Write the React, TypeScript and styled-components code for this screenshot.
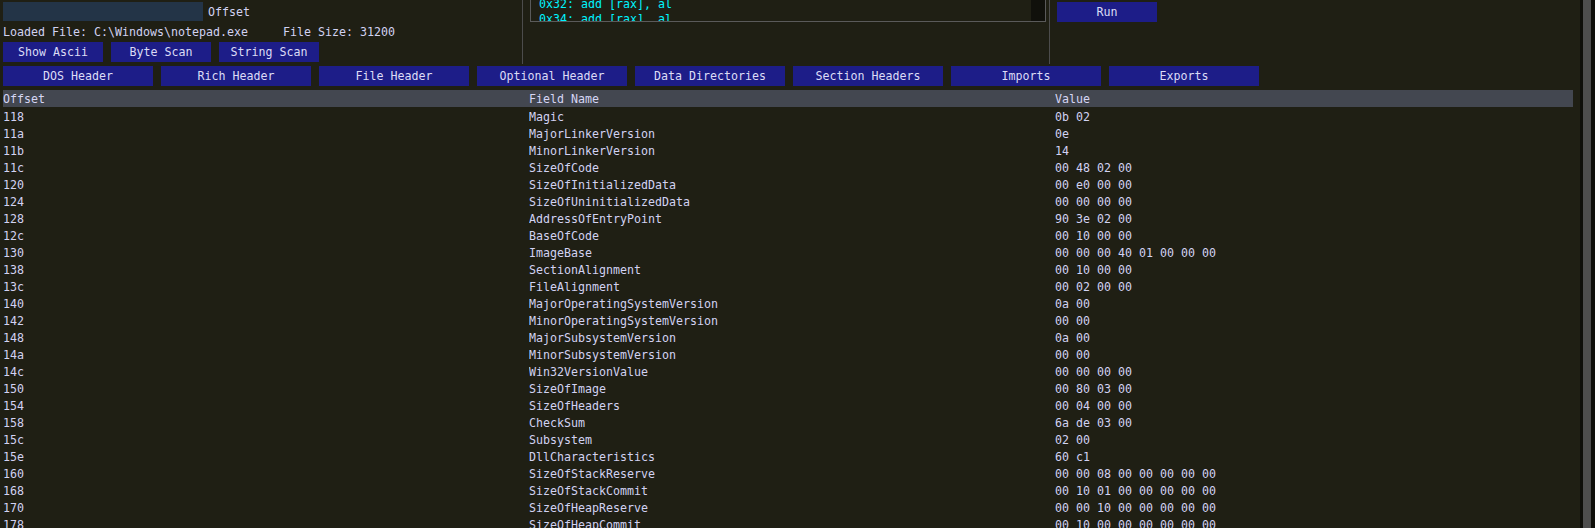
import React from "react";
import styled, { createGlobalStyle } from "styled-components";

const GlobalStyle = createGlobalStyle`
  html, body {
    margin: 0;
    padding: 0;
    background: #1f1f14;
  }
  body {
    font-family: "DejaVu Sans Mono", "Liberation Mono", monospace;
    font-size: 11.63px;
    color: #d2d2f2;
  }
  * { box-sizing: border-box; }
`;

const Page = styled.div`
  display: flex;
  width: 1595px;
  height: 528px;
  overflow: hidden;
  background: #1f1f14;
`;

const Main = styled.div`
  flex: 1;
  min-width: 0;
  padding-left: 3px;
  overflow: hidden;
  line-height: 14px;
`;

const TopSection = styled.div`
  display: grid;
  grid-template-columns: 519px 527px 1fr;
  height: 64px;
`;

const Column = styled.div<{ $divided?: boolean }>`
  display: flex;
  flex-direction: column;
  min-width: 0;
  padding-left: ${(p) => (p.$divided ? "7px" : "0")};
  border-left: ${(p) => (p.$divided ? "1px solid #4c4c4c" : "none")};
`;

const InputRow = styled.div`
  display: flex;
  align-items: center;
  gap: 5px;
  margin-top: 2px;
`;

const SearchInput = styled.input`
  width: 200px;
  height: 19px;
  border: none;
  outline: none;
  padding: 0 4px;
  background: #233447;
  color: #d2d2f2;
  font: inherit;
`;

const Label = styled.span`
  white-space: pre;
`;

const InfoLine = styled.div`
  margin-top: 4px;
  height: 14px;
  white-space: pre;
`;

const ButtonRow = styled.div<{ $top: number }>`
  display: flex;
  gap: 8px;
  margin-top: ${(p) => p.$top}px;
`;

const Button = styled.button<{ $w: number }>`
  display: flex;
  align-items: center;
  justify-content: center;
  width: ${(p) => p.$w}px;
  height: 20px;
  padding: 0;
  border: none;
  background: #1d1d88;
  color: #dcdcf6;
  font: inherit;
  line-height: 14px;
  white-space: pre;
  flex: none;
`;

const DisasmBox = styled.div`
  position: relative;
  width: 516px;
  height: 22px;
  border: 1px solid #5a5a5a;
  border-top: none;
  overflow: hidden;
`;

const DisasmLines = styled.div`
  margin-top: -3.5px;
  padding-left: 8px;
  line-height: 15px;
  color: #00f4ff;
  white-space: pre;
`;

const DisasmScrollbar = styled.div`
  position: absolute;
  top: 0;
  right: 0;
  bottom: 0;
  width: 14px;
  background: #10100b;
`;

const RunRow = styled.div`
  margin-top: 2px;
`;

const Table = styled.div`
  margin-top: 4px;
  width: 1570px;
`;

const TableRow = styled.div<{ $header?: boolean }>`
  display: grid;
  grid-template-columns: 526px 526px 1fr;
  height: 17px;
  padding-top: ${(p) => (p.$header ? "2px" : "3px")};
  background: ${(p) => (p.$header ? "#434750" : "transparent")};
  color: ${(p) => (p.$header ? "#d6d6f4" : "#d2d2f2")};
`;

const Cell = styled.div`
  white-space: pre;
  overflow: hidden;
`;

const Scrollbar = styled.div`
  flex: none;
  width: 15px;
  height: 528px;
  padding: 0 4px 0 3px;
  background: #0f0f0a;
`;

const ScrollThumb = styled.div`
  width: 8px;
  height: 100%;
  background: #4e4e4e;
`;

const topButtons = ["Show Ascii", "Byte Scan", "String Scan"];
const headerButtons = [
  "DOS Header",
  "Rich Header",
  "File Header",
  "Optional Header",
  "Data Directories",
  "Section Headers",
  "Imports",
  "Exports",
];

const rows: [string, string, string][] = [
  ["118", "Magic", "0b 02"],
  ["11a", "MajorLinkerVersion", "0e"],
  ["11b", "MinorLinkerVersion", "14"],
  ["11c", "SizeOfCode", "00 48 02 00"],
  ["120", "SizeOfInitializedData", "00 e0 00 00"],
  ["124", "SizeOfUninitializedData", "00 00 00 00"],
  ["128", "AddressOfEntryPoint", "90 3e 02 00"],
  ["12c", "BaseOfCode", "00 10 00 00"],
  ["130", "ImageBase", "00 00 00 40 01 00 00 00"],
  ["138", "SectionAlignment", "00 10 00 00"],
  ["13c", "FileAlignment", "00 02 00 00"],
  ["140", "MajorOperatingSystemVersion", "0a 00"],
  ["142", "MinorOperatingSystemVersion", "00 00"],
  ["148", "MajorSubsystemVersion", "0a 00"],
  ["14a", "MinorSubsystemVersion", "00 00"],
  ["14c", "Win32VersionValue", "00 00 00 00"],
  ["150", "SizeOfImage", "00 80 03 00"],
  ["154", "SizeOfHeaders", "00 04 00 00"],
  ["158", "CheckSum", "6a de 03 00"],
  ["15c", "Subsystem", "02 00"],
  ["15e", "DllCharacteristics", "60 c1"],
  ["160", "SizeOfStackReserve", "00 00 08 00 00 00 00 00"],
  ["168", "SizeOfStackCommit", "00 10 01 00 00 00 00 00"],
  ["170", "SizeOfHeapReserve", "00 00 10 00 00 00 00 00"],
  ["178", "SizeOfHeapCommit", "00 10 00 00 00 00 00 00"],
];

export default function App() {
  return (
    <>
      <GlobalStyle />
      <Page>
        <Main>
          <TopSection>
            <Column>
              <InputRow>
                <SearchInput readOnly value="" />
                <Label>Offset</Label>
              </InputRow>
              <InfoLine>{"Loaded File: C:\\Windows\\notepad.exe     File Size: 31200"}</InfoLine>
              <ButtonRow $top={3}>
                {topButtons.map((b) => (
                  <Button key={b} $w={100}>{b}</Button>
                ))}
              </ButtonRow>
            </Column>
            <Column $divided>
              <DisasmBox>
                <DisasmLines>
                  <div>0x32: add [rax], al</div>
                  <div>0x34: add [rax], al</div>
                </DisasmLines>
                <DisasmScrollbar />
              </DisasmBox>
            </Column>
            <Column $divided>
              <RunRow>
                <Button $w={100}>Run</Button>
              </RunRow>
            </Column>
          </TopSection>
          <ButtonRow $top={2}>
            {headerButtons.map((b) => (
              <Button key={b} $w={150}>{b}</Button>
            ))}
          </ButtonRow>
          <Table>
            <TableRow $header>
              <Cell>Offset</Cell>
              <Cell>Field Name</Cell>
              <Cell>Value</Cell>
            </TableRow>
            {rows.map(([o, f, v]) => (
              <TableRow key={o}>
                <Cell>{o}</Cell>
                <Cell>{f}</Cell>
                <Cell>{v}</Cell>
              </TableRow>
            ))}
          </Table>
        </Main>
        <Scrollbar>
          <ScrollThumb />
        </Scrollbar>
      </Page>
    </>
  );
}
